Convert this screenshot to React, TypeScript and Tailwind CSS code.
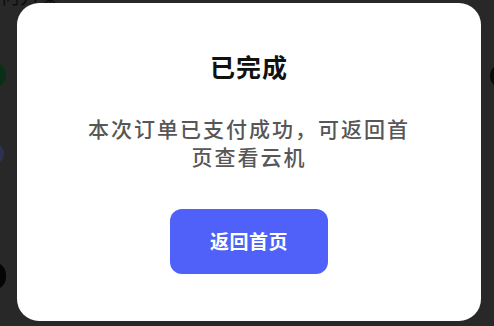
export default function App() {
  return (
    <div
      className="relative w-[494px] h-[326px] overflow-hidden bg-[#282828]"
      style={{ fontFamily: '"Noto Sans CJK SC", "Noto Sans", sans-serif' }}
    >
      {/* dimmed page behind the dialog */}
      <div className="absolute inset-0 pointer-events-none">
        <div className="absolute left-[0px] top-[-19px] text-[20px] text-[#0d0d0d]">何方案</div>
        <div className="absolute left-[-20px] top-[62px] w-[26px] h-[26px] rounded-full bg-[#0b2f16]" />
        <div className="absolute left-[-22px] top-[143px] w-[26px] h-[22px] rounded-full bg-[#2c3350]" />
        <div className="absolute left-[-20px] top-[262px] w-[26px] h-[28px] rounded-full bg-[#050505]" />
        <div className="absolute right-[-22px] top-[64px] w-[26px] h-[24px] rounded-full bg-[#0a0a0a]" />
      </div>

      <div className="relative ml-[17px] mt-[3px] w-[464px] h-[318px] rounded-[22px] bg-white pt-[46px] flex flex-col items-center">
        <h1 className="text-[25px] leading-[34px] font-bold tracking-[1px] text-[#111111]">已完成</h1>
        <p className="mt-[31px] w-[330px] text-center text-[21px] leading-[28px] font-medium tracking-[2px] text-[#575757]">
          本次订单已支付成功，可返回首页查看云机
        </p>
        <button className="mt-[39px] w-[158px] h-[65px] rounded-[12px] bg-[#5061f9] text-white text-[19px] font-bold tracking-[0.5px]">
          返回首页
        </button>
      </div>
    </div>
  );
}
